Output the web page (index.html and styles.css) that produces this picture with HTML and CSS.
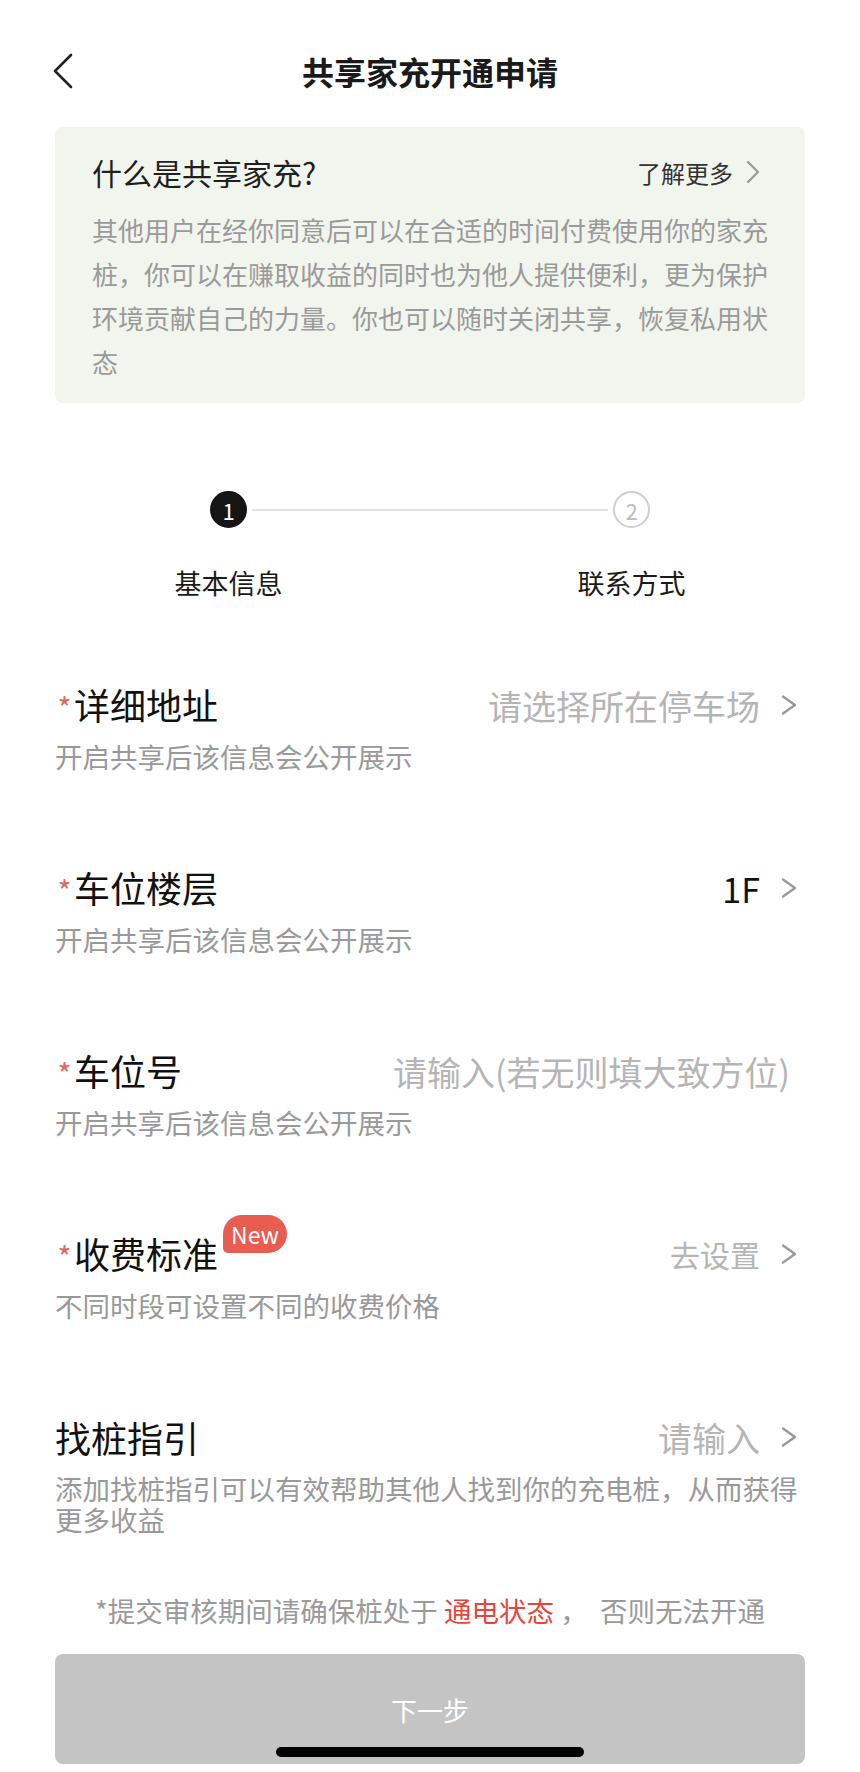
FILE: index.html
```html
<!DOCTYPE html>
<html lang="zh-CN">
<head>
  <meta charset="UTF-8" />
  <meta name="viewport" content="width=device-width, initial-scale=1.0"/>
  <title>共享家充开通申请</title>
  <link rel="stylesheet" href="styles.css">
</head>
<body>

<div class="header">
  <div class="back">
    <svg width="24" height="36" viewBox="0 0 24 36"><path d="M20 2 L4 18 L20 34" fill="none" stroke="#222" stroke-width="2.6" stroke-linecap="round" stroke-linejoin="round"/></svg>
  </div>
  <h1>共享家充开通申请</h1>
  <div></div>
</div>

<div class="intro">
  <div class="intro-head">
    <span class="intro-title">什么是共享家充?</span>
    <span class="more">了解更多
      <svg width="16" height="24" viewBox="0 0 16 24"><path d="M3 2 L13 12 L3 22" fill="none" stroke="#999" stroke-width="2.2" stroke-linecap="round" stroke-linejoin="round"/></svg>
    </span>
  </div>
  <p class="intro-text">其他用户在经你同意后可以在合适的时间付费使用你的家充桩，你可以在赚取收益的同时也为他人提供便利，更为保护环境贡献自己的力量。你也可以随时关闭共享，恢复私用状态</p>
</div>

<div class="steps">
  <span class="dot active">1</span>
  <span class="step-line"></span>
  <span class="dot">2</span>
</div>
<div class="step-labels">
  <span>基本信息</span>
  <span>联系方式</span>
</div>

<div class="form">
  <div class="field">
    <div class="field-head">
      <span class="field-title"><span class="req">*</span>详细地址</span>
      <span class="field-value placeholder">请选择所在停车场</span>
      <svg class="arrow" width="16" height="20" viewBox="0 0 16 20"><path d="M2 1.5 L14 10 L2 18.5" fill="none" stroke="#999" stroke-width="2.4" stroke-linecap="round" stroke-linejoin="round"/></svg>
    </div>
    <p class="field-note">开启共享后该信息会公开展示</p>
  </div>

  <div class="field">
    <div class="field-head">
      <span class="field-title"><span class="req">*</span>车位楼层</span>
      <span class="field-value">1F</span>
      <svg class="arrow" width="16" height="20" viewBox="0 0 16 20"><path d="M2 1.5 L14 10 L2 18.5" fill="none" stroke="#999" stroke-width="2.4" stroke-linecap="round" stroke-linejoin="round"/></svg>
    </div>
    <p class="field-note">开启共享后该信息会公开展示</p>
  </div>

  <div class="field">
    <div class="field-head">
      <span class="field-title"><span class="req">*</span>车位号</span>
      <span class="field-value placeholder no-arrow">请输入(若无则填大致方位)</span>
    </div>
    <p class="field-note">开启共享后该信息会公开展示</p>
  </div>

  <div class="field">
    <div class="field-head">
      <span class="field-title"><span class="req">*</span>收费标准</span>
      <span class="badge">New</span>
      <span class="field-value placeholder small">去设置</span>
      <svg class="arrow" width="16" height="20" viewBox="0 0 16 20"><path d="M2 1.5 L14 10 L2 18.5" fill="none" stroke="#999" stroke-width="2.4" stroke-linecap="round" stroke-linejoin="round"/></svg>
    </div>
    <p class="field-note">不同时段可设置不同的收费价格</p>
  </div>

  <div class="field">
    <div class="field-head">
      <span class="field-title">找桩指引</span>
      <span class="field-value placeholder">请输入</span>
      <svg class="arrow" width="16" height="20" viewBox="0 0 16 20"><path d="M2 1.5 L14 10 L2 18.5" fill="none" stroke="#999" stroke-width="2.4" stroke-linecap="round" stroke-linejoin="round"/></svg>
    </div>
    <p class="field-note">添加找桩指引可以有效帮助其他人找到你的充电桩，从而获得更多收益</p>
  </div>
</div>

<p class="notice">*提交审核期间请确保桩处于 <span class="warn">通电状态</span> ，&nbsp; 否则无法开通</p>

<button class="next-btn">下一步<span class="home-bar"></span></button>

</body>
</html>
```

FILE: styles.css
```css
body {
  font-family: "Noto Sans CJK SC", "Noto Sans", sans-serif;
  background: #fff;
  color: #1a1a1a;
  margin: 0;
  padding: 0;
  width: 860px;
}
p {
  margin: 0;
}
.header {
  display: grid;
  grid-template-columns: 1fr auto 1fr;
  align-items: center;
  height: 48px;
  margin-top: 47px;
}
.back {
  padding-left: 51px;
  display: flex;
}
.header h1 {
  margin: 0;
  font-size: 32px;
  font-weight: 700;
  line-height: 48px;
}
.intro {
  margin: 32px 55px 0;
  padding: 25px 36px 19px 37px;
  background: #f2f5ed;
  border-radius: 8px;
}
.intro-head {
  display: flex;
  justify-content: space-between;
  align-items: center;
  height: 40px;
}
.intro-title {
  font-size: 30px;
  color: #1f1f1f;
}
.more {
  display: flex;
  align-items: center;
  padding-right: 8px;
  font-size: 24px;
  color: #333;
}
.more svg {
  margin-left: 12px;
}
.intro-text {
  margin-top: 16px;
  font-size: 26px;
  line-height: 44px;
  color: #9a9a9a;
}
.steps {
  width: 440px;
  margin: 88px auto 0;
  display: flex;
  align-items: center;
}
.dot {
  width: 37px;
  height: 37px;
  box-sizing: border-box;
  border-radius: 50%;
  border: 2px solid #cfcfcf;
  color: #bdbdbd;
  font-size: 22px;
  display: flex;
  align-items: center;
  justify-content: center;
}
.dot.active {
  background: #151515;
  border-color: #151515;
  color: #fff;
}
.step-line {
  flex: 1;
  height: 2px;
  background: #e3e3e3;
  margin: 0 5px;
}
.step-labels {
  width: 603px;
  margin: 37px auto 0;
  display: flex;
  justify-content: space-between;
}
.step-labels span {
  width: 200px;
  text-align: center;
  font-size: 27px;
  line-height: 36px;
}
.form {
  margin-top: 80px;
}
.field {
  padding: 0 55px;
  margin-bottom: 92px;
}
.field:last-child {
  margin-bottom: 0;
}
.field-head {
  display: flex;
  align-items: center;
  height: 48px;
  padding-right: 8px;
}
.field-title {
  font-size: 36px;
  line-height: 48px;
  color: #111;
}
.req {
  display: inline-block;
  width: 19px;
  text-align: center;
  font-size: 30px;
  color: #e2675c;
}
.badge {
  align-self: flex-start;
  margin: -15px 0 0 5px;
  padding: 0 8px;
  height: 38px;
  line-height: 38px;
  font-size: 23px;
  color: #fff;
  background: #e85c52;
  border-radius: 19px 19px 19px 5px;
}
.field-value {
  margin-left: auto;
  font-size: 34px;
  color: #111;
}
.field-value.placeholder {
  color: #b5b5b5;
}
.field-value.small {
  font-size: 30px;
}
.field-value.no-arrow {
  margin-right: 7px;
}
.arrow {
  margin-left: 21px;
}
.field-note {
  margin-top: 12px;
  font-size: 27.5px;
  line-height: 31px;
  color: #999;
}
.notice {
  margin-top: 55px;
  text-align: center;
  font-size: 27.5px;
  line-height: 40px;
  color: #9a9a9a;
}
.warn {
  color: #e4463e;
}
.next-btn {
  position: relative;
  display: flex;
  align-items: center;
  justify-content: center;
  width: 750px;
  height: 110px;
  margin: 24px 55px 0;
  border: none;
  border-radius: 8px;
  background: #c4c4c4;
  color: #fff;
  font-family: inherit;
  font-size: 26px;
}
.home-bar {
  position: absolute;
  left: 50%;
  bottom: 7px;
  width: 308px;
  height: 10px;
  margin-left: -154px;
  border-radius: 5px;
  background: #000;
}
```
